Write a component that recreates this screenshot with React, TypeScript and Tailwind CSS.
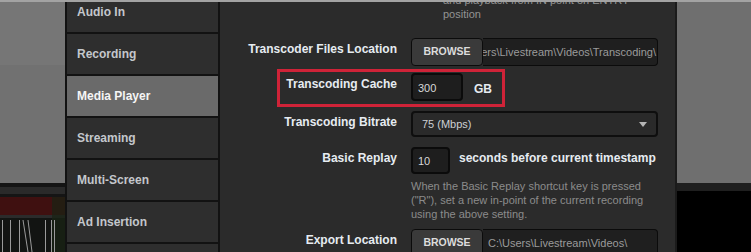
import React from "react";

type RowProps = { label: string; className?: string; children: React.ReactNode };

const Row = ({ label, className, children }: RowProps) => (
  <div className={"relative flex gap-[14px] " + (className ?? "")}>
    <div className="w-[177px] shrink-0 pt-[4px] text-right text-[12px] font-bold leading-[14px] text-[#e6ebf1]">
      {label}
    </div>
    <div className="flex min-w-0 flex-1 items-center">{children}</div>
  </div>
);

const Browse = () => (
  <button className="relative z-10 flex h-full w-[72px] shrink-0 items-center justify-center rounded-[4px] border border-[#0b0b0b] bg-[#3a3a3a] text-[10.5px] font-bold text-[#dcdcdc]">
    BROWSE
  </button>
);

const tabs = ["Audio In", "Recording", "Media Player", "Streaming", "Multi-Screen", "Ad Insertion", "Output"];

const LeftStrip = () => (
  <svg width="65" height="250" viewBox="0 0 65 250" className="block">
    <rect x="0" y="0" width="65" height="181" fill="#717171" />
    <rect x="0" y="0" width="65" height="63" fill="#767676" />
    <rect x="0" y="181" width="65" height="4" fill="#141414" />
    <rect x="0" y="185" width="65" height="7" fill="#2a2a2a" />
    <rect x="0" y="192" width="65" height="3" fill="#151515" />
    <rect x="0" y="195" width="65" height="18" fill="#3f1010" />
    <rect x="0" y="213" width="65" height="3" fill="#2b2b2b" />
    <rect x="0" y="216" width="65" height="34" fill="#121412" />
    <rect x="52" y="195" width="13" height="55" fill="#1a2414" opacity="0.7" />
    <g stroke="#9a9a9a" strokeWidth="1">
      <line x1="2.5" y1="218" x2="2.5" y2="250" />
      <line x1="10.5" y1="218" x2="10.5" y2="250" />
      <line x1="19.5" y1="218" x2="19.5" y2="250" />
      <line x1="23" y1="218" x2="28" y2="250" />
      <line x1="28" y1="218" x2="32" y2="250" />
      <line x1="45.5" y1="218" x2="45.5" y2="250" />
      <line x1="51.5" y1="218" x2="51.5" y2="250" />
      <line x1="54.5" y1="218" x2="54.5" y2="250" />
    </g>
  </svg>
);

export default function App() {
  return (
    <div className="flex h-[252px] w-[751px] flex-col overflow-hidden bg-black font-['Liberation_Sans',Arial,sans-serif]">
      <div className="h-[2px] shrink-0 bg-[#a3a3a3]" />
      <div className="flex min-h-0 flex-1">
        <div className="w-[65px] shrink-0">
          <LeftStrip />
        </div>

        <div className="w-[155px] shrink-0 overflow-hidden border-x-2 border-[#121212] bg-[#121212]">
          <div className="-mt-[10px] flex flex-col">
            {tabs.map((t) => (
              <div
                key={t}
                className={
                  "flex h-[42px] shrink-0 items-center border-b-2 border-[#121212] pl-[10px] text-[12px] font-bold " +
                  (t === "Media Player" ? "bg-[#6a6a6a] text-[#f5f5f5]" : "bg-[#2e2e2e] text-[#c4c7cc]")
                }
              >
                {t}
              </div>
            ))}
          </div>
        </div>

        <div className="w-[457px] shrink-0 overflow-hidden border-r-2 border-[#1b1b1b] bg-[#2b2b2b] pr-[17px]">
          <div className="-mt-[9px] ml-[223px] text-[11px] leading-[14px] text-[#939393]">
            <div className="whitespace-nowrap">and playback from IN point on ENTRY</div>
            <div>position</div>
          </div>

          <Row label="Transcoder Files Location" className="mt-[17px] h-[28px]">
            <div className="flex h-full w-full">
              <Browse />
              <div className="flex h-full min-w-0 flex-1 items-center justify-end overflow-hidden rounded-r-[4px] border border-l-0 border-[#0b0b0b] bg-[#1f1f1f] pr-[1px]">
                <span className="whitespace-nowrap text-[11px] text-[#9b9b9b]">C:\Users\Livestream\Videos\Transcoding\</span>
              </div>
            </div>
          </Row>

          <Row label="Transcoding Cache" className="mt-[7px] h-[28px]">
            <div className="flex h-full w-[52px] items-center rounded-[4px] border-2 border-[#0b0b0b] bg-[#1e1e1e] pl-[5px] pt-[3px] text-[11px] text-[#d8d8d8]">
              300
            </div>
            <span className="ml-[11px] pt-[3px] text-[12px] font-bold text-[#e6ebf1]">GB</span>
            <div className="pointer-events-none absolute -top-[4px] left-[57px] h-[38px] w-[228px] border-[3px] border-[#cf2338]" />
          </Row>

          <Row label="Transcoding Bitrate" className="mt-[10px] h-[26px]">
            <div className="flex h-full w-full items-center justify-between rounded-[4px] border-2 border-[#0e0e0e] bg-[#2a2a2a] pl-[9px] pr-[9px] text-[11px] text-[#cdd0d4]">
              <span>75 (Mbps)</span>
              <svg width="8" height="5" viewBox="0 0 8 5">
                <path d="M0 0 L8 0 L4 5 Z" fill="#b5b5b5" />
              </svg>
            </div>
          </Row>

          <Row label="Basic Replay" className="mt-[10px] h-[27px]">
            <div className="flex h-full w-[39px] items-center rounded-[4px] border-2 border-[#0b0b0b] bg-[#1e1e1e] pl-[5px] pt-[2px] text-[11px] text-[#d8d8d8]">
              10
            </div>
            <span className="ml-[9px] self-start pt-[4px] text-[12px] font-bold leading-[14px] text-[#e6ebf1]">
              seconds before current timestamp
            </span>
          </Row>

          <div className="ml-[191px] mt-[5px] text-[11px] leading-[14px] text-[#8b8b8b]">
            <div className="whitespace-nowrap">When the Basic Replay shortcut key is pressed</div>
            <div className="whitespace-nowrap">("R"), set a new in-point of the current recording</div>
            <div className="whitespace-nowrap">using the above setting.</div>
          </div>

          <Row label="Export Location" className="mt-[8px] h-[28px]">
            <div className="flex h-full w-full">
              <Browse />
              <div className="flex h-full min-w-0 flex-1 items-center overflow-hidden rounded-r-[4px] border border-l-0 border-[#0b0b0b] bg-[#1f1f1f] pl-[5px]">
                <span className="whitespace-nowrap text-[11px] text-[#9b9b9b]">C:\Users\Livestream\Videos\</span>
              </div>
            </div>
          </Row>
        </div>

        <div className="flex min-w-0 flex-1 flex-col">
          <div className="h-[181px] shrink-0 bg-[#6f6f6f]" />
          <div className="h-[8px] shrink-0 bg-[#1f1f1f]" />
          <div className="flex-1 bg-black" />
        </div>
      </div>
    </div>
  );
}
